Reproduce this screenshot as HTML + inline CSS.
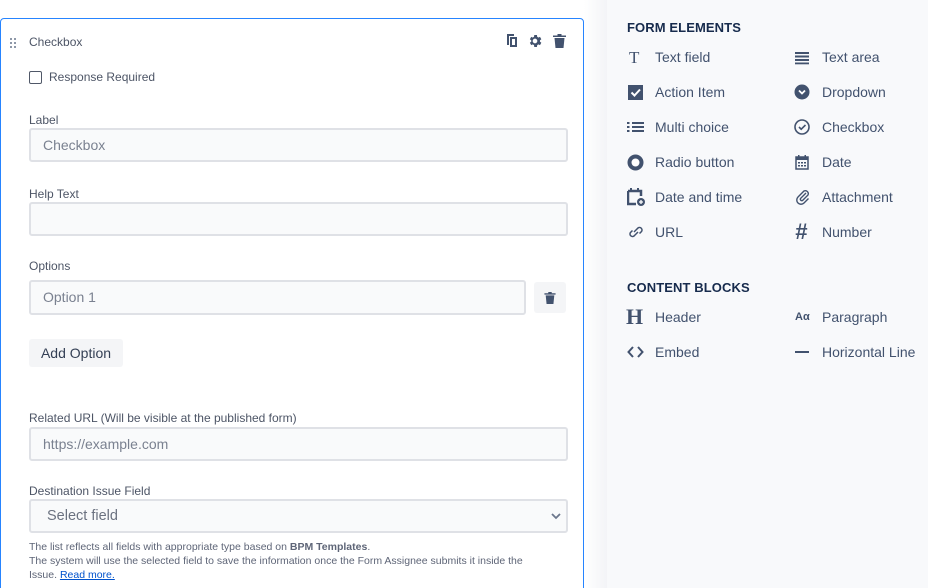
<!DOCTYPE html>
<html><head><meta charset="utf-8"><style>
*{box-sizing:border-box;margin:0;padding:0}
html,body{width:928px;height:588px;overflow:hidden}
body{background:#fff;font-family:"Liberation Sans",sans-serif;position:relative}
.a{position:absolute}
.card{left:0;top:18px;width:584px;height:580px;border:1px solid #2684ff;border-radius:4px;background:#fff}
.lbl{font-size:12px;color:#4d5566;left:29px}
.inp{left:29px;width:539px;height:34px;border:2px solid #dfe1e6;border-radius:3px;background:#f9fafb;font-size:14px;color:#7a8190;padding-left:12px;line-height:30px}
.side{left:607px;top:0;width:321px;height:588px;background:#f8f9fb}
.h{font-size:13px;font-weight:bold;color:#172b4d;letter-spacing:.1px}
.it{font-size:14px;color:#42526e}
.ic{width:18px;height:18px}
</style></head><body>
<div class="a" style="left:584px;top:0;width:23px;height:588px;background:linear-gradient(90deg,#fff,#f3f4f7)"></div>
<div class="a card"></div>
<svg class="a" style="left:9px;top:37px" width="8" height="12"><g fill="#6b778c"><circle cx="2" cy="2" r="1"/><circle cx="6" cy="2" r="1"/><circle cx="2" cy="6" r="1"/><circle cx="6" cy="6" r="1"/><circle cx="2" cy="10" r="1"/><circle cx="6" cy="10" r="1"/></g></svg>
<div class="a" style="left:29px;top:35px;font-size:12px;color:#4d5566">Checkbox</div>
<svg class="a" style="left:505px;top:33px" width="14" height="15" viewBox="0 0 14 15"><path d="M2 1h7v2H4v9H2z M5 4h7v10H5z M7 6v6h3V6z" fill="#42526e" fill-rule="evenodd"/></svg>
<svg class="a" style="left:527px;top:33px" width="16" height="16" viewBox="0 0 24 24"><path fill="#42526e" d="M19.4 13a7.5 7.5 0 000-2l2.1-1.6-2-3.5-2.5 1a7 7 0 00-1.7-1L14.9 3h-4l-.4 2.9a7 7 0 00-1.7 1l-2.5-1-2 3.5L6.4 11a7.5 7.5 0 000 2l-2.1 1.6 2 3.5 2.5-1a7 7 0 001.7 1l.4 2.9h4l.4-2.9a7 7 0 001.7-1l2.5 1 2-3.5zM12 15.5a3.5 3.5 0 110-7 3.5 3.5 0 010 7z"/></svg>
<svg class="a" style="left:553px;top:34px" width="13" height="14" viewBox="0 0 13 14"><path fill="#42526e" d="M0 1.5h4.5V0h4v1.5H13V3H0z M1.5 4h10l-1 10h-8z"/></svg>
<div class="a" style="left:29px;top:71px;width:13px;height:13px;border:1.5px solid #505868;border-radius:2px"></div>
<div class="a" style="left:49px;top:70px;font-size:12px;color:#4d5566">Response Required</div>
<div class="a lbl" style="top:113px">Label</div>
<div class="a inp" style="top:128px">Checkbox</div>
<div class="a lbl" style="top:187px">Help Text</div>
<div class="a inp" style="top:202px"></div>
<div class="a lbl" style="top:259px">Options</div>
<div class="a inp" style="top:280px;width:497px;height:35px">Option 1</div>
<div class="a" style="left:534px;top:282px;width:32px;height:31px;background:#f4f5f7;border-radius:3px"></div>
<svg class="a" style="left:544px;top:292px" width="12" height="12" viewBox="0 0 13 14"><path fill="#42526e" d="M0 1.5h4.5V0h4v1.5H13V3H0z M1.5 4h10l-1 10h-8z"/></svg>
<div class="a" style="left:29px;top:339px;width:94px;height:28px;background:#f4f5f7;border-radius:3px;font-size:14px;color:#344055;text-align:center;line-height:28px">Add Option</div>
<div class="a lbl" style="top:411px">Related URL (Will be visible at the published form)</div>
<div class="a inp" style="top:427px">https://example.com</div>
<div class="a lbl" style="top:484px">Destination Issue Field</div>
<div class="a inp" style="top:499px;color:#6b7280;padding-left:16px;font-size:14.5px">Select field</div>
<svg class="a" style="left:551px;top:512px" width="10" height="8"><path d="M1 2l4 4 4-4" stroke="#6b778c" stroke-width="1.8" fill="none"/></svg>
<div class="a" style="left:29px;top:540px;width:515px;font-size:10.5px;line-height:14px;color:#5e6577">The list reflects all fields with appropriate type based on <b>BPM Templates</b>.<br>The system will use the selected field to save the information once the Form Assignee submits it inside the Issue. <span style="color:#0052cc;text-decoration:underline">Read more.</span></div>

<div class="a side"></div>
<div class="a h" style="left:627px;top:20px">FORM ELEMENTS</div>
<div class="a h" style="left:627px;top:280px">CONTENT BLOCKS</div>

<div class="a" style="left:629px;top:48px;font-family:'Liberation Serif',serif;font-size:17px;color:#42526e">T</div>
<svg class="a ic" style="left:627px;top:83px" viewBox="0 0 18 18"><rect x="1" y="2" width="15" height="15" fill="#42526e"/><path d="M4.5 9.5l3 3 5.5-6" stroke="#fff" stroke-width="2" fill="none"/></svg>
<svg class="a ic" style="left:627px;top:118px" viewBox="0 0 18 18"><g fill="#42526e"><rect x="0" y="4" width="2.5" height="2"/><rect x="0" y="8" width="2.5" height="2"/><rect x="0" y="12" width="2.5" height="2"/><rect x="5" y="4" width="12" height="2"/><rect x="5" y="8" width="12" height="2"/><rect x="5" y="12" width="12" height="2"/></g></svg>
<svg class="a ic" style="left:627px;top:153px" viewBox="0 0 18 18"><circle cx="8.5" cy="9.5" r="6" stroke="#42526e" stroke-width="4" fill="#fff"/></svg>
<svg class="a ic" style="left:627px;top:188px" viewBox="0 0 18 18"><path d="M1 3h13v5" stroke="#42526e" stroke-width="2.5" fill="none"/><path d="M1 3v13h8" stroke="#42526e" stroke-width="2.5" fill="none"/><rect x="3" y="0" width="2" height="3" fill="#42526e"/><rect x="10" y="0" width="2" height="3" fill="#42526e"/><circle cx="14" cy="14" r="4" fill="#42526e"/><path d="M14 12v4M12 14h4" stroke="#fff" stroke-width="1.3"/></svg>
<svg class="a ic" style="left:627px;top:223px" viewBox="0 0 18 18"><g stroke="#42526e" stroke-width="1.5" fill="none"><path d="M7 9l4-4a2.5 2.5 0 013.5 3.5l-2 2"/><path d="M11 9l-4 4a2.5 2.5 0 01-3.5-3.5l2-2"/></g></svg>
<div class="a it" style="left:655px;top:49px">Text field</div>
<div class="a it" style="left:655px;top:84px">Action Item</div>
<div class="a it" style="left:655px;top:119px">Multi choice</div>
<div class="a it" style="left:655px;top:154px">Radio button</div>
<div class="a it" style="left:655px;top:189px">Date and time</div>
<div class="a it" style="left:655px;top:224px">URL</div>

<svg class="a ic" style="left:795px;top:48px" viewBox="0 0 18 18"><g fill="#42526e"><rect x="0" y="4" width="14" height="2"/><rect x="0" y="7.5" width="14" height="2"/><rect x="0" y="11" width="14" height="2"/><rect x="0" y="14.5" width="14" height="1.8"/></g></svg>
<svg class="a ic" style="left:794px;top:83px" viewBox="0 0 18 18"><circle cx="8" cy="9" r="7.5" fill="#42526e"/><path d="M5 7.5l3 3 3-3" stroke="#fff" stroke-width="1.8" fill="none"/></svg>
<svg class="a ic" style="left:794px;top:118px" viewBox="0 0 18 18"><circle cx="8" cy="9" r="7" stroke="#42526e" stroke-width="1.6" fill="none"/><path d="M5 9l2.2 2.2L11.5 7" stroke="#42526e" stroke-width="1.6" fill="none"/></svg>
<svg class="a ic" style="left:795px;top:153px" viewBox="0 0 18 18"><rect x="1" y="4" width="12" height="12" stroke="#42526e" stroke-width="1.5" fill="none"/><rect x="1" y="4" width="12" height="3" fill="#42526e"/><rect x="3" y="2" width="1.5" height="3" fill="#42526e"/><rect x="9.5" y="2" width="1.5" height="3" fill="#42526e"/><g fill="#42526e"><rect x="3" y="9" width="2" height="1.5"/><rect x="6" y="9" width="2" height="1.5"/><rect x="9" y="9" width="2" height="1.5"/><rect x="3" y="12" width="2" height="1.5"/><rect x="6" y="12" width="2" height="1.5"/><rect x="9" y="12" width="2" height="1.5"/></g></svg>
<svg class="a ic" style="left:795px;top:188px" viewBox="0 0 18 18"><path d="M11 5l-5.5 5.5a1.5 1.5 0 002 2L13 7a3 3 0 00-4-4L3 9a4.2 4.2 0 006 6l4.5-4.5" stroke="#42526e" stroke-width="1.4" fill="none"/></svg>
<div class="a" style="left:795px;top:220px;font-size:22px;font-weight:bold;color:#42526e;line-height:24px;font-style:italic">#</div>
<div class="a it" style="left:822px;top:49px">Text area</div>
<div class="a it" style="left:822px;top:84px">Dropdown</div>
<div class="a it" style="left:822px;top:119px">Checkbox</div>
<div class="a it" style="left:822px;top:154px">Date</div>
<div class="a it" style="left:822px;top:189px">Attachment</div>
<div class="a it" style="left:822px;top:224px">Number</div>

<div class="a" style="left:626px;top:305px;font-family:'Liberation Serif',serif;font-size:22px;font-weight:bold;color:#42526e;line-height:24px">H</div>
<svg class="a ic" style="left:627px;top:343px" viewBox="0 0 18 18"><path d="M6 4L1.5 9 6 14M11 4l4.5 5L11 14" stroke="#42526e" stroke-width="2" fill="none"/></svg>
<div class="a it" style="left:655px;top:309px">Header</div>
<div class="a it" style="left:655px;top:344px">Embed</div>
<div class="a" style="left:795px;top:311px;font-size:11px;font-weight:bold;color:#42526e">Aα</div>
<div class="a" style="left:795px;top:351px;width:14px;height:2px;background:#42526e"></div>
<div class="a it" style="left:822px;top:309px">Paragraph</div>
<div class="a it" style="left:822px;top:344px">Horizontal Line</div>
</body></html>
